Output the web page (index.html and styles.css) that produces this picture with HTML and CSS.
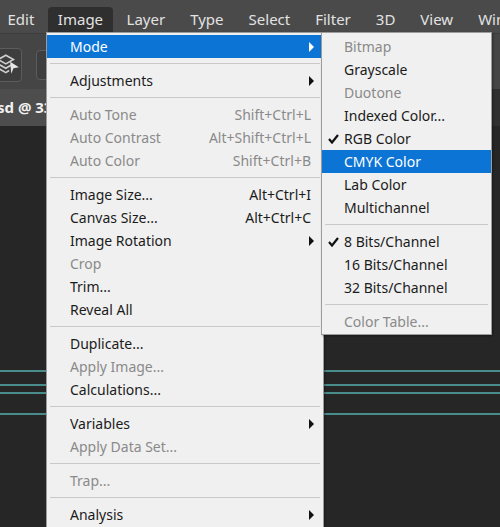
FILE: index.html
```html
<!DOCTYPE html>
<html lang="en">
<head>
    <meta charset="UTF-8">
    <title>Image menu</title>
    <link rel="stylesheet" href="styles.css">
</head>
<body>
    <div class="app">
        <div class="menubar">
            <span class="menubar-item first">Edit</span>
            <span class="menubar-item active">Image</span>
            <span class="menubar-item">Layer</span>
            <span class="menubar-item">Type</span>
            <span class="menubar-item">Select</span>
            <span class="menubar-item">Filter</span>
            <span class="menubar-item">3D</span>
            <span class="menubar-item">View</span>
            <span class="menubar-item">Window</span>
        </div>

        <div class="optionsbar">
            <div class="tool-btn">
                <svg width="22" height="22" viewBox="0 0 22 22">
                    <path d="M2 6 L9 2 L16 6 L9 10 Z" fill="none" stroke="#cfcfcf" stroke-width="1.5"/>
                    <path d="M2 10 L9 14 L14 11" fill="none" stroke="#cfcfcf" stroke-width="1.5"/>
                    <path d="M2 14 L9 18 L12 16" fill="none" stroke="#cfcfcf" stroke-width="1.5"/>
                    <path d="M13 8 L21 13 L16 14 L14 19 Z" fill="#e6e6e6"/>
                </svg>
            </div>
            <div class="tool-btn wide"></div>
        </div>

        <div class="doc-tabs">
            <div class="doc-tab">sd @ 33.3% (RGB/8)</div>
        </div>

        <div class="canvas">
            <div class="guide g1"></div>
            <div class="guide g2"></div>
            <div class="guide g3"></div>
            <div class="guide g4"></div>
        </div>

        <!-- Image dropdown -->
        <div class="menu main-menu">
            <div class="row hot"><span class="gutter"></span><span class="label">Mode</span><span class="arrow"></span></div>
            <div class="sep"></div>
            <div class="row"><span class="gutter"></span><span class="label">Adjustments</span><span class="arrow"></span></div>
            <div class="sep"></div>
            <div class="row off"><span class="gutter"></span><span class="label">Auto Tone</span><span class="keys">Shift+Ctrl+L</span></div>
            <div class="row off"><span class="gutter"></span><span class="label">Auto Contrast</span><span class="keys">Alt+Shift+Ctrl+L</span></div>
            <div class="row off"><span class="gutter"></span><span class="label">Auto Color</span><span class="keys">Shift+Ctrl+B</span></div>
            <div class="sep"></div>
            <div class="row"><span class="gutter"></span><span class="label">Image Size...</span><span class="keys">Alt+Ctrl+I</span></div>
            <div class="row"><span class="gutter"></span><span class="label">Canvas Size...</span><span class="keys">Alt+Ctrl+C</span></div>
            <div class="row"><span class="gutter"></span><span class="label">Image Rotation</span><span class="arrow"></span></div>
            <div class="row off"><span class="gutter"></span><span class="label">Crop</span></div>
            <div class="row"><span class="gutter"></span><span class="label">Trim...</span></div>
            <div class="row"><span class="gutter"></span><span class="label">Reveal All</span></div>
            <div class="sep"></div>
            <div class="row"><span class="gutter"></span><span class="label">Duplicate...</span></div>
            <div class="row off"><span class="gutter"></span><span class="label">Apply Image...</span></div>
            <div class="row"><span class="gutter"></span><span class="label">Calculations...</span></div>
            <div class="sep"></div>
            <div class="row"><span class="gutter"></span><span class="label">Variables</span><span class="arrow"></span></div>
            <div class="row off"><span class="gutter"></span><span class="label">Apply Data Set...</span></div>
            <div class="sep"></div>
            <div class="row off"><span class="gutter"></span><span class="label">Trap...</span></div>
            <div class="sep"></div>
            <div class="row"><span class="gutter"></span><span class="label">Analysis</span><span class="arrow"></span></div>
        </div>

        <!-- Mode submenu -->
        <div class="menu sub-menu">
            <div class="row off"><span class="gutter"></span><span class="label">Bitmap</span></div>
            <div class="row"><span class="gutter"></span><span class="label">Grayscale</span></div>
            <div class="row off"><span class="gutter"></span><span class="label">Duotone</span></div>
            <div class="row"><span class="gutter"></span><span class="label">Indexed Color...</span></div>
            <div class="row"><span class="gutter"><svg class="check" width="11" height="10" viewBox="0 0 11 10"><path d="M1 5 L4 8.5 L10 1" fill="none" stroke="#111" stroke-width="2.2"/></svg></span><span class="label">RGB Color</span></div>
            <div class="row hot"><span class="gutter"></span><span class="label">CMYK Color</span></div>
            <div class="row"><span class="gutter"></span><span class="label">Lab Color</span></div>
            <div class="row"><span class="gutter"></span><span class="label">Multichannel</span></div>
            <div class="sep"></div>
            <div class="row"><span class="gutter"><svg class="check" width="11" height="10" viewBox="0 0 11 10"><path d="M1 5 L4 8.5 L10 1" fill="none" stroke="#111" stroke-width="2.2"/></svg></span><span class="label">8 Bits/Channel</span></div>
            <div class="row"><span class="gutter"></span><span class="label">16 Bits/Channel</span></div>
            <div class="row"><span class="gutter"></span><span class="label">32 Bits/Channel</span></div>
            <div class="sep"></div>
            <div class="row off"><span class="gutter"></span><span class="label">Color Table...</span></div>
        </div>
    </div>
</body>
</html>
```

FILE: styles.css
```css
body {
    margin: 0;
    background-color: #262626;
    font-family: "Noto Sans", "Open Sans", sans-serif;
    overflow: hidden;
}

.app {
    position: relative;
    width: 500px;
    height: 527px;
    overflow: hidden;
    display: flex;
    flex-direction: column;
}

/* top menu bar */
.menubar {
    height: 33px;
    flex: none;
    display: flex;
    align-items: flex-end;
    background-color: #4a4a4a;
    margin-left: -5px;
    white-space: nowrap;
    font-size: 15px;
    color: #e2e2e2;
}

.menubar-item {
    height: 26px;
    line-height: 24px;
    padding: 0 12.5px;
}

.menubar-item.active {
    background-color: #2f2f2f;
    border-radius: 4px 4px 0 0;
    margin: 0 1px;
    padding: 0 10px;
}

/* options bar */
.optionsbar {
    height: 56px;
    flex: none;
    display: flex;
    align-items: center;
    gap: 14px;
    background-color: #454545;
    border-top: 1px solid #3c3c3c;
    box-sizing: border-box;
    padding-top: 6px;
}

.tool-btn {
    width: 36px;
    height: 34px;
    margin-left: -14px;
    border: 1px solid #5c5c5c;
    border-radius: 4px;
    background-color: #3e3e3e;
    display: flex;
    align-items: center;
    justify-content: flex-end;
    padding-right: 1px;
    box-sizing: border-box;
}

.tool-btn svg {
    width: 24px;
    height: 24px;
}

.tool-btn.wide {
    width: 60px;
    height: 30px;
    margin-left: 0;
}

/* document tabs */
.doc-tabs {
    height: 37px;
    flex: none;
    display: flex;
    background-color: #303030;
}

.doc-tab {
    width: 60px;
    background-color: #4d4d4d;
    color: #f2f2f2;
    font-weight: bold;
    font-size: 15px;
    line-height: 36px;
    white-space: nowrap;
    overflow: hidden;
    text-indent: -3px;
}

/* canvas with guides */
.canvas {
    flex: 1;
    background-color: #262626;
}

.guide {
    height: 2px;
    background-color: #4a8b8c;
}

.g1 { margin-top: 244px; }
.g2 { margin-top: 12px; }
.g3 { margin-top: 6px; }
.g4 { margin-top: 19px; }

/* dropdown menus */
.menu {
    position: absolute;
    top: 32px;
    background-color: #f0f0f0;
    border: 1px solid #9c9c9c;
    padding: 2px 0 1px;
    font-size: 14px;
    color: #1b1b1b;
    box-shadow: 1px 1px 2px rgba(0, 0, 0, 0.35);
}

.main-menu {
    left: 46px;
    width: 276px;
}

.sub-menu {
    left: 321px;
    width: 169px;
}

.row {
    height: 23px;
    display: flex;
    align-items: center;
    padding-right: 9px;
    white-space: nowrap;
}

.row.off {
    color: #8a8a8a;
}

.row.hot {
    background-color: #0b74d5;
    color: #ffffff;
}

.gutter {
    width: 23px;
    flex: none;
    display: flex;
    align-items: center;
    padding-left: 6px;
    box-sizing: border-box;
}

.sub-menu .gutter {
    width: 22px;
}

.label {
    flex: 1;
}

.keys {
    margin-right: 3px;
}

.arrow {
    width: 0;
    height: 0;
    border-left: 5px solid #111;
    border-top: 5px solid transparent;
    border-bottom: 5px solid transparent;
}

.row.hot .arrow {
    border-left-color: #ffffff;
}

.sep {
    height: 1px;
    margin: 5px 3px;
    background-color: #c9c9c9;
}
```
